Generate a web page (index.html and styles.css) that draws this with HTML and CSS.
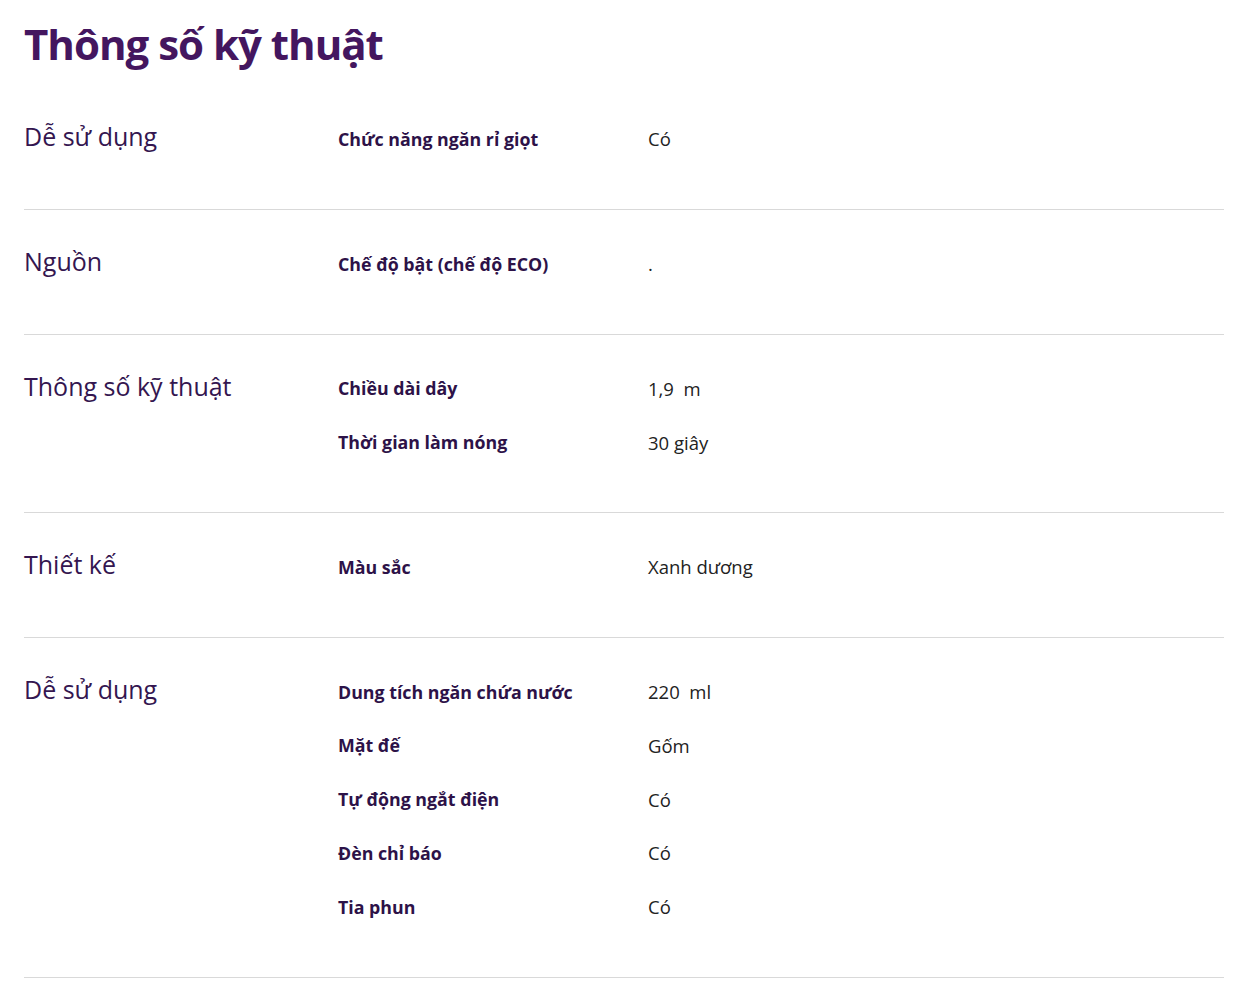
FILE: index.html
```html
<!DOCTYPE html>
<html lang="vi">
<head>
<meta charset="utf-8">
<title>Thông số kỹ thuật</title>
<link rel="stylesheet" href="styles.css">
</head>
<body>
<main class="specs">
  <h1 class="specs-title">Thông số kỹ thuật</h1>

  <section class="group">
    <h2 class="group-name">Dễ sử dụng</h2>
    <dl class="rows">
      <div class="row"><dt>Chức năng ngăn rỉ giọt</dt><dd>Có</dd></div>
    </dl>
  </section>

  <section class="group">
    <h2 class="group-name">Nguồn</h2>
    <dl class="rows">
      <div class="row"><dt>Chế độ bật (chế độ ECO)</dt><dd>.</dd></div>
    </dl>
  </section>

  <section class="group">
    <h2 class="group-name">Thông số kỹ thuật</h2>
    <dl class="rows">
      <div class="row"><dt>Chiều dài dây</dt><dd>1,9&nbsp; m</dd></div>
      <div class="row"><dt>Thời gian làm nóng</dt><dd>30 giây</dd></div>
    </dl>
  </section>

  <section class="group">
    <h2 class="group-name">Thiết kế</h2>
    <dl class="rows">
      <div class="row"><dt>Màu sắc</dt><dd>Xanh dương</dd></div>
    </dl>
  </section>

  <section class="group">
    <h2 class="group-name">Dễ sử dụng</h2>
    <dl class="rows">
      <div class="row"><dt>Dung tích ngăn chứa nước</dt><dd>220&nbsp; ml</dd></div>
      <div class="row"><dt>Mặt đế</dt><dd>Gốm</dd></div>
      <div class="row"><dt>Tự động ngắt điện</dt><dd>Có</dd></div>
      <div class="row"><dt>Đèn chỉ báo</dt><dd>Có</dd></div>
      <div class="row"><dt>Tia phun</dt><dd>Có</dd></div>
    </dl>
  </section>
</main>
</body>
</html>
```

FILE: styles.css
```css
html, body {
  margin: 0;
  padding: 0;
  background: #ffffff;
}

body {
  font-family: "Open Sans", "Noto Sans", sans-serif;
  color: #1f1f1f;
}

.specs {
  width: 1200px;
  padding: 0 0 0 24px;
}

.specs-title {
  margin: 0;
  padding-top: 14px;
  height: 71px;
  font-size: 42px;
  line-height: 60px;
  font-weight: 700;
  color: #44165f;
  letter-spacing: -1px;
}

.group {
  display: grid;
  grid-template-columns: 314px 1fr;
  padding: 27px 0 43px;
  border-bottom: 1px solid #d9d9d9;
}

.group-name {
  margin: 0;
  font-size: 25px;
  line-height: 54px;
  font-weight: 400;
  color: #341650;
  margin-top: -3px;
}

.rows {
  margin: 0;
  display: flex;
  flex-direction: column;
}

.row {
  display: grid;
  grid-template-columns: 310px 1fr;
  height: 53.75px;
  align-items: center;
}

.row dt {
  font-size: 17.8px;
  font-weight: 700;
  color: #2d1248;
}

.row dd {
  margin: 0;
  font-size: 18.5px;
  font-weight: 400;
  color: #222222;
}
```
